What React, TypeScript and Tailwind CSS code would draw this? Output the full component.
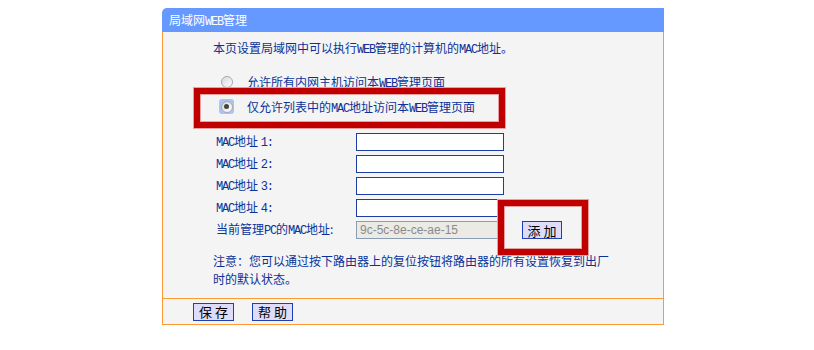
import React from "react";

const L = ({ children }: { children: React.ReactNode }) => (
  <span className="font-['Liberation_Mono',monospace] text-[12px] tracking-[-1.2px]">{children}</span>
);

const Radio = ({ checked }: { checked?: boolean }) => (
  <span
    className={
      "flex items-center justify-center w-[15px] h-[15px] rounded-[3px] " +
      (checked ? "bg-[#a9c4f5]" : "")
    }
  >
    <span className="flex items-center justify-center w-[12px] h-[12px] rounded-full border border-[#a8a8a8] bg-gradient-to-br from-[#d8d8d8] to-[#ffffff]">
      {checked && <span className="w-[5px] h-[5px] rounded-full bg-[#444]" />}
    </span>
  </span>
);

const MacRow = ({ n }: { n: number }) => (
  <div className="flex items-center h-[22px]">
    <div className="w-[140px]">
      <L>MAC</L>地址 <L>{n}:</L>
    </div>
    <div className="w-[148px] h-[18px] bg-white border border-[#1c3ca6]" />
  </div>
);

const Btn = ({ children, w = "w-[41px]" }: { children: React.ReactNode; w?: string }) => (
  <div
    className={
      w +
      " h-[18px] flex items-center justify-center bg-[#dedcf8] border border-[#1f40b4] text-black text-[13px] tracking-[3px] pl-[3px] leading-none"
    }
  >
    {children}
  </div>
);

export default function App() {
  return (
    <div className="w-[814px] h-[350px] bg-white pt-[8px] font-['Noto_Sans_CJK_SC',sans-serif] text-[12px] text-[#0b3299]">
      <div className="relative ml-[162px] w-[502px]">
        <div className="h-[24px] bg-[#6699ff] rounded-tl-[5px] text-white pl-[7px] leading-[24px] text-[12px]">
          局域网<L>WEB</L>管理
        </div>
        <div className="bg-[#f4f4f4] border-l border-r border-[#ff9933] pt-[6px] pb-[10px]">
          <div className="h-[20px] leading-[20px] pl-[50px]">
            本页设置局域网中可以执行<L>WEB</L>管理的计算机的<L>MAC</L>地址。
          </div>
          <div className="mt-[11px] pl-[56px]">
            <div className="flex items-center h-[25px]">
              <Radio />
              <span className="ml-[13px] mt-[3px]">
                允许所有内网主机访问本<L>WEB</L>管理页面
              </span>
            </div>
            <div className="flex items-center h-[25px]">
              <Radio checked />
              <span className="ml-[13px] mt-[3px]">
                仅允许列表中的<L>MAC</L>地址访问本<L>WEB</L>管理页面
              </span>
            </div>
          </div>
          <div className="mt-[12px] pl-[53px]">
            <MacRow n={1} />
            <MacRow n={2} />
            <MacRow n={3} />
            <MacRow n={4} />
            <div className="flex items-center h-[22px]">
              <div className="w-[140px]">
                当前管理<L>PC</L>的<L>MAC</L>地址:
              </div>
              <div className="w-[148px] h-[18px] bg-[#ebeae4] border border-[#8a9bb4] text-[#8a8a8a] font-['Liberation_Sans',sans-serif] text-[12px] leading-[16px] pl-[3px]">
                9c-5c-8e-ce-ae-15
              </div>
              <div className="ml-[18px]">
                <Btn w="w-[40px]">添加</Btn>
              </div>
            </div>
          </div>
          <div className="mt-[11px] pl-[50px] leading-[18px]">
            注意：您可以通过按下路由器上的复位按钮将路由器的所有设置恢复到出厂
            <br />
            时的默认状态。
          </div>
        </div>
        <div className="h-[27px] bg-[#f4f4f4] border border-[#ff9933] flex items-center pl-[30px] gap-[18px]">
          <Btn>保存</Btn>
          <Btn>帮助</Btn>
        </div>
        <div className="absolute left-[32px] top-[80px] w-[311px] h-[40px] border-[6px] border-[#c00000] shadow-[0_0_0_1px_#e6a0a0,inset_0_0_0_1px_#e6a0a0]" />
        <div className="absolute left-[336px] top-[192px] w-[90px] h-[55px] border-[6px] border-[#c00000] shadow-[0_0_0_1px_#e6a0a0,inset_0_0_0_1px_#e6a0a0]" />
      </div>
    </div>
  );
}
